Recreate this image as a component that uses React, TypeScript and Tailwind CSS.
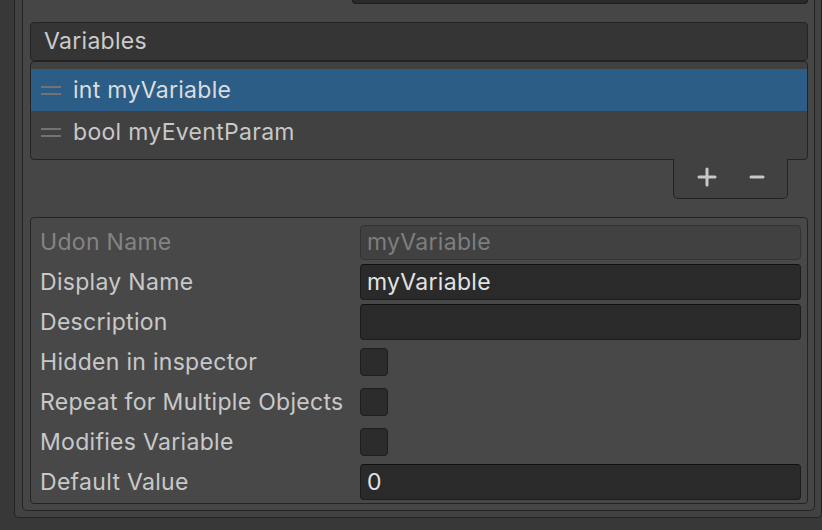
import React from "react";

const font = { fontFamily: "Inter, 'Noto Sans', sans-serif" };

function Field({ value, disabled }: { value?: string; disabled?: boolean }) {
    return (
        <div
            className={
                disabled
                    ? "flex-1 h-[35px] flex items-center pl-[6px] rounded-[4px] bg-[#414141] border border-[#333333] text-[#7e7e7e]"
                    : "flex-1 h-[36px] flex items-center pl-[6px] rounded-[4px] bg-[#2a2a2a] border border-[#1c1c1c] border-t-[#111111] text-[#e2e2e2]"
            }
        >
            {value}
        </div>
    );
}

function Check() {
    return <div className="w-[28px] h-[28px] rounded-[4px] bg-[#2c2c2c] border border-[#1e1e1e]" />;
}

function Row({ label, dim, children }: { label: string; dim?: boolean; children: React.ReactNode }) {
    return (
        <div className="flex items-center h-[40px]">
            <div className={dim ? "w-[320px] text-[#848484]" : "w-[320px] text-[#c8c8c8]"}>{label}</div>
            <div className="flex-1 flex">{children}</div>
        </div>
    );
}

function Handle() {
    return (
        <div className="w-[20px] flex flex-col gap-[5px]">
            <div className="h-[2px] bg-[#737373]" />
            <div className="h-[2px] bg-[#737373]" />
        </div>
    );
}

export default function App() {
    return (
        <div style={font} className="w-[822px] h-[530px] overflow-hidden bg-[#383838] pl-[14px] text-[23px] tracking-[0.3px] leading-none">
            {/* outer panel */}
            <div className="h-[518px] bg-[#424242] border border-t-0 border-[#242424] rounded-b-[5px] pl-[7px] pr-[6px] pb-[6px]">
                {/* inner panel */}
                <div className="h-full bg-[#464646] border border-t-0 border-[#242424] rounded-b-[5px] pl-[7px] pr-[6px] pb-[6px] flex flex-col">
                    {/* clipped field from the row above */}
                    <div className="h-[22px] flex">
                        <div className="ml-[322px] flex-1 h-[4px] bg-[#2a2a2a] border border-t-0 border-[#1e1e1e] rounded-b-[4px]" />
                    </div>

                    {/* Variables header */}
                    <div className="h-[39px] flex items-center pl-[13px] bg-[#353535] border border-[#232323] rounded-[4px] text-[#cbcbcb]">
                        Variables
                    </div>

                    {/* list */}
                    <div className="bg-[#414141] border border-[#232323] rounded-[4px] pt-[7px] pb-[6px]">
                        <div className="h-[42px] flex items-center gap-[12px] pl-[10px] bg-[#2c5d87] text-[#dcdcdc]">
                            <Handle />
                            <span>int myVariable</span>
                        </div>
                        <div className="h-[42px] flex items-center gap-[12px] pl-[10px] text-[#c8c8c8]">
                            <Handle />
                            <span>bool myEventParam</span>
                        </div>
                    </div>

                    {/* add / remove */}
                    <div className="flex justify-end pr-[20px]">
                        <div className="relative -mt-[1px] w-[115px] h-[40px] bg-[#414141] border border-t-0 border-[#232323] rounded-b-[5px] flex items-center justify-center gap-[32px] pb-[3px]">
                            <svg width="20" height="20" viewBox="0 0 20 20">
                                <path d="M2 10H18M10 2V18" stroke="#c8c8c8" strokeWidth="3" strokeLinecap="round" />
                            </svg>
                            <svg width="16" height="20" viewBox="0 0 16 20">
                                <path d="M2 10H14" stroke="#c8c8c8" strokeWidth="3" strokeLinecap="round" />
                            </svg>
                        </div>
                    </div>

                    {/* properties */}
                    <div className="mt-[18px] flex-1 bg-[#484848] border border-[#242424] rounded-[4px] pl-[9px] pr-[6px] pt-[4px]">
                        <Row label="Udon Name" dim>
                            <Field value="myVariable" disabled />
                        </Row>
                        <Row label="Display Name">
                            <Field value="myVariable" />
                        </Row>
                        <Row label="Description">
                            <Field />
                        </Row>
                        <Row label="Hidden in inspector">
                            <Check />
                        </Row>
                        <Row label="Repeat for Multiple Objects">
                            <Check />
                        </Row>
                        <Row label="Modifies Variable">
                            <Check />
                        </Row>
                        <Row label="Default Value">
                            <Field value="0" />
                        </Row>
                    </div>
                </div>
            </div>
        </div>
    );
}
